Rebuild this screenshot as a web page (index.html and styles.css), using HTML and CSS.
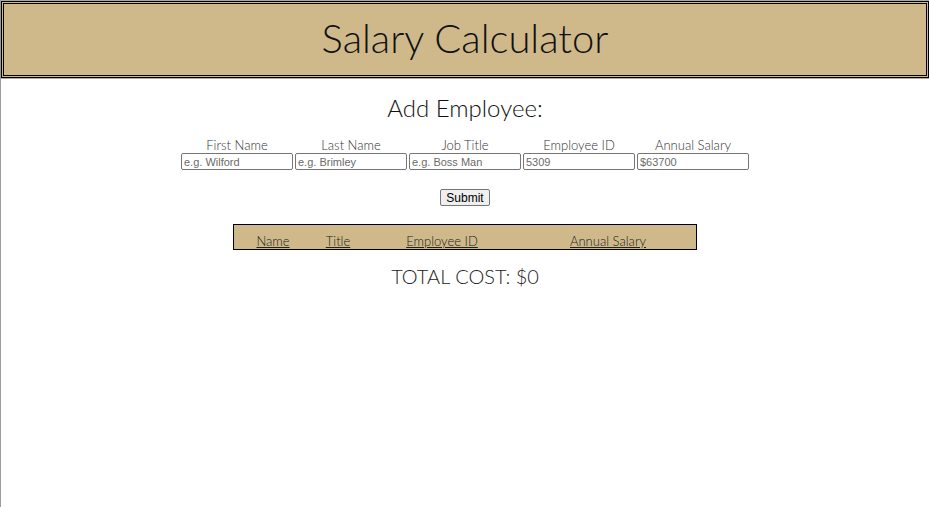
FILE: index.html
```html
<!DOCTYPE html>
<html lang="en">
<head>
<meta charset="utf-8">
<title>Salary Calculator</title>
<link rel="stylesheet" href="styles.css">
</head>
<body>
<header class="banner">
  <h1 class="banner-title">Salary Calculator</h1>
</header>
<main class="content">
  <h2 class="section-title">Add Employee:</h2>
  <form class="employee-form">
    <div class="fields">
      <label class="field">
        <span class="field-label">First Name</span>
        <input class="field-input" type="text" placeholder="e.g. Wilford">
      </label>
      <label class="field">
        <span class="field-label">Last Name</span>
        <input class="field-input" type="text" placeholder="e.g. Brimley">
      </label>
      <label class="field">
        <span class="field-label">Job Title</span>
        <input class="field-input" type="text" placeholder="e.g. Boss Man">
      </label>
      <label class="field">
        <span class="field-label">Employee ID</span>
        <input class="field-input" type="text" placeholder="5309">
      </label>
      <label class="field">
        <span class="field-label">Annual Salary</span>
        <input class="field-input" type="text" placeholder="$63700">
      </label>
    </div>
    <button class="submit-btn" type="button">Submit</button>
  </form>
  <table class="employee-table">
    <thead>
      <tr>
        <th class="col-name">Name</th>
        <th class="col-title">Title</th>
        <th class="col-id">Employee ID</th>
        <th class="col-salary">Annual Salary</th>
      </tr>
    </thead>
  </table>
  <p class="total">TOTAL COST: $0</p>
</main>
</body>
</html>
```
FILE: styles.css
```css
html {
  background: #fff;
}
body {
  margin: 0;
  min-height: 507px;
  border-left: 1px solid #9c9c9c;
  font-family: Lato, "Open Sans", sans-serif;
  color: #222;
  background: #fff;
}
.banner {
  background: #a9a9a9;
  padding: 1px 0 1px 0;
}
.banner-title {
  margin: 0;
  height: 71px;
  border: 3px double #000;
  background: #cfb98a;
  font-weight: 300;
  font-size: 40px;
  line-height: 68px;
  text-align: center;
  color: #111;
}
.content {
  display: flex;
  flex-direction: column;
  align-items: center;
}
.section-title {
  margin: 14px 0 0;
  font-weight: 300;
  font-size: 24px;
  line-height: 30px;
  color: #111;
}
.employee-form {
  display: flex;
  flex-direction: column;
  align-items: center;
  margin-top: 14px;
}
.fields {
  display: flex;
  gap: 2px;
}
.field {
  display: flex;
  flex-direction: column;
  align-items: center;
  width: 112px;
}
.field-label {
  font-size: 13px;
  font-weight: 300;
  line-height: 16px;
  color: #333;
}
.field-input {
  box-sizing: border-box;
  width: 112px;
  height: 17px;
  margin: 0;
  padding: 1px 2px;
  border: 1px solid #767676;
  border-radius: 2px;
  font-family: "Liberation Sans", Arial, sans-serif;
  font-size: 11px;
}
.field-input::placeholder {
  color: #6b6b6b;
}
.submit-btn {
  margin-top: 19px;
  font-family: "Liberation Sans", Arial, sans-serif;
  font-size: 12px;
  height: 17px;
  padding: 0 5px;
  border: 1px solid #767676;
  border-radius: 2px;
  background: #efefef;
  color: #000;
}
.employee-table {
  margin-top: 18px;
  width: 464px;
  border: 1px solid #000;
  border-collapse: collapse;
  background: #cfb98a;
}
.employee-table th {
  font-weight: 300;
  font-size: 13px;
  text-decoration: underline;
  color: #222;
  padding: 8px 0 0;
  height: 16px;
  line-height: 16px;
}
.col-name { width: 78px; }
.col-title { width: 52px; }
.col-id { width: 156px; }
.total {
  margin: 14px 0 0;
  font-size: 20px;
  font-weight: 300;
  color: #222;
}
```
